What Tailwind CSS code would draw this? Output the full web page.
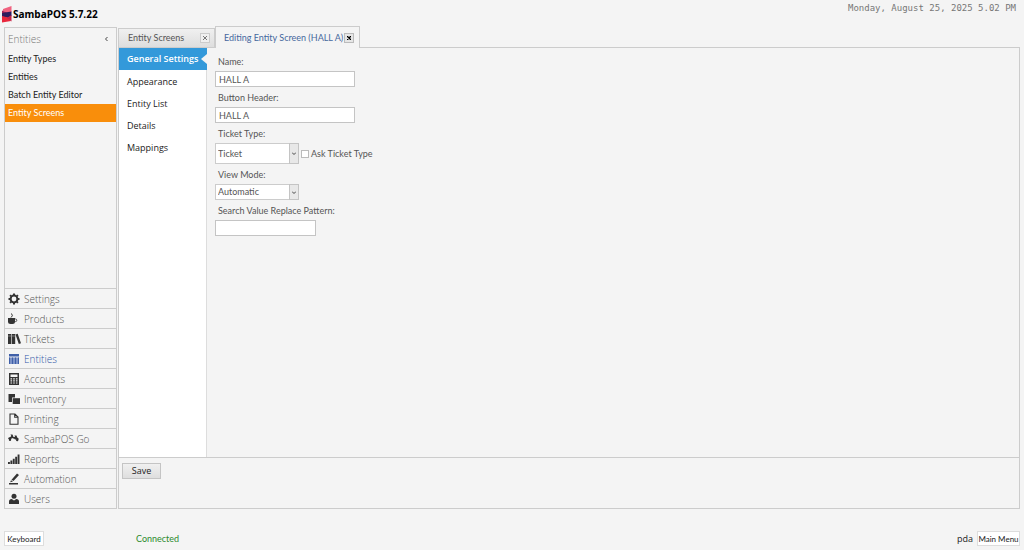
<!DOCTYPE html>
<html lang="en">
<head>
    <meta charset="UTF-8">
    <meta name="viewport" content="width=device-width, initial-scale=1.0">
    <title>SambaPOS 5.7.22</title>
    <script src="https://cdn.jsdelivr.net/npm/@tailwindcss/browser@4"></script>
</head>
<body class="bg-[#f4f4f4] font-['Lato','Noto_Sans',sans-serif] text-[9px] leading-3 text-[#555]">
    <div class="min-h-screen flex flex-col">
        <!-- Header -->
        <header class="h-[27px] flex items-start justify-between pl-[2px] pr-2">
            <div class="flex items-center gap-px pt-1">
                <svg class="w-[10px] h-[18px]" viewBox="0 0 10 18">
                    <path d="M1 4 9.500 1v6L5 8 1 6z" fill="#f0627f"/>
                    <path d="M0 5.500 6 8 0 12z" fill="#a81f52"/>
                    <path d="M0 11.500V8L9.500 6.500V11l-4 2z" fill="#2c1d5e"/>
                    <path d="M0 11 6 12.500 9 16 0 17.500z" fill="#e8273c"/>
                    <path d="M9.500 10v6.500L5 13z" fill="#c32448"/>
                </svg>
                <h1 class="text-[10px] leading-5 font-bold text-black font-['Open_Sans',sans-serif]">SambaPOS 5.7.22</h1>
            </div>
            <time class="pt-[2px] text-[9px] text-[#777] font-['DejaVu_Sans_Mono',monospace]">Monday, August 25, 2025 5.02 PM</time>
        </header>

        <div class="flex-1 flex gap-px pl-1 pr-1">
            <!-- Sidebar -->
            <aside class="w-[113px] shrink-0 flex flex-col border border-[#ccc]">
                <div class="h-[22px] flex items-center justify-between pl-[3px] pr-2 text-[10px] font-['Open_Sans',sans-serif] font-light text-[#777]">
                    <h2>Entities</h2>
                    <button type="button" aria-label="Collapse" class="text-[#444]">
                        <svg class="w-1 h-[6px]" viewBox="0 0 4 6" fill="none" stroke="currentColor"><path d="M3.500 1 1.500 3l2 2"/></svg>
                    </button>
                </div>
                <nav class="flex flex-col text-[#222]">
                    <a href="#" class="h-[18px] px-[3px] flex items-center">Entity Types</a>
                    <a href="#" class="h-[18px] px-[3px] flex items-center">Entities</a>
                    <a href="#" class="h-[18px] px-[3px] flex items-center">Batch Entity Editor</a>
                    <a href="#" class="h-[18px] px-[3px] flex items-center bg-[#f98e0b] text-white">Entity Screens</a>
                </nav>
                <nav class="mt-auto flex flex-col text-[10px] font-['Open_Sans',sans-serif] font-light text-[#555] [&>a]:h-5 [&>a]:flex [&>a]:items-center [&>a]:gap-1 [&>a]:pl-[3px] [&>a]:border-t [&>a]:border-[#ccc] [&_svg]:size-3 [&_svg]:text-[#333]">
                    <a href="#">
                        <svg viewBox="0 0 12 12" fill="none" stroke="currentColor"><circle cx="6" cy="6" r="3.400" stroke-width="2"/><path d="M6 .5V2M6 10v1.500M.5 6H2M10 6h1.500M2.100 2.100l1.100 1.100M8.800 8.800l1.100 1.100M2.100 9.900l1.100-1.100M8.800 3.200l1.100-1.100" stroke-width="2"/></svg>
                        Settings
                    </a>
                    <a href="#">
                        <svg viewBox="0 0 12 12" fill="currentColor"><path d="M0 5h7v3.500Q7 11 4.500 11h-2Q0 11 0 8.500z"/><path d="M7 6h.5q1.300 0 1.300 1.300T7.500 8.600H7" fill="none" stroke="currentColor" stroke-width=".8"/><path d="M3 4.500Q5.500 3 3.500.5" fill="none" stroke="currentColor"/></svg>
                        Products
                    </a>
                    <a href="#">
                        <svg viewBox="0 0 12 12" fill="currentColor" overflow="visible"><path d="M0 1h3.300v10H0zM3.900 1h3.300v10H3.900zM7.500 1.500l2.200-.7L13 10.300l-2.200.7z"/><path d="M0 3h3.300M3.900 3h3.300" stroke="#999" stroke-width=".7"/></svg>
                        Tickets
                    </a>
                    <a href="#" class="text-[#3458a8]">
                        <svg viewBox="0 0 12 12" fill="#3f5fa8"><path d="M1 1h10v2.500H1z"/><path d="M1 4.500h10V11H1z" fill="#7c93c8"/><path d="M1.500 4.500V11M4.500 4.500V11M7.500 4.500V11M10.500 4.500V11" stroke="#3f5fa8"/></svg>
                        Entities
                    </a>
                    <a href="#">
                        <svg viewBox="0 0 12 12" fill="currentColor"><path d="M1 0h10v12H1z"/><path d="M2.500 1.500h7V4h-7zM2.500 5.200h1.600v1.200H2.500zM5.200 5.200h1.600v1.200H5.200zM7.900 5.200h1.600v1.200H7.900zM2.500 7.300h1.600v1.200H2.500zM5.200 7.300h1.600v1.200H5.200zM7.900 7.300h1.600v1.200H7.900zM2.500 9.400h1.600v1.200H2.500zM5.200 9.400h1.600v1.200H5.200zM7.900 9.400h1.600v1.200H7.900z" fill="#f4f4f4"/></svg>
                        Accounts
                    </a>
                    <a href="#">
                        <svg viewBox="0 0 12 12" fill="currentColor"><path d="M.5 1H7v3.500H4V9H.5z"/><path d="M4.700 5.200H12V11H4.700z"/></svg>
                        Inventory
                    </a>
                    <a href="#">
                        <svg viewBox="0 0 12 12" fill="none" stroke="currentColor"><path d="M2 1h5l3 3v7.300H2zM6.700 1v3.300H10" stroke-width="1.100"/></svg>
                        Printing
                    </a>
                    <a href="#">
                        <svg viewBox="0 0 12 12" fill="currentColor"><path d="M2.500 1.500h2L5.500 4H7L6.500 2.500h2L9.200 4.500q1.600.5 1.600 2H7q-.4-1-1.700-1L4 5 3.300 6H0Q.3 4.200 2.300 4L3.300 3z"/><circle cx="2" cy="6.700" r="1.200"/><circle cx="9.200" cy="7" r="1.200"/></svg>
                        SambaPOS Go
                    </a>
                    <a href="#">
                        <svg viewBox="0 0 12 12" fill="currentColor"><path d="M0 9h1.900v2H0zM2.400 7.500h1.900V11H2.400zM4.800 5.800h1.900V11H4.800zM7.200 3.800h1.900V11H7.200zM9.600 1.500h1.900V11H9.600z"/></svg>
                        Reports
                    </a>
                    <a href="#">
                        <svg viewBox="0 0 12 12" fill="currentColor"><path d="M9 .5 11 2 5.500 8 3.500 6.700zM3 7.200 5 8.600 2.200 9.300zM1 10h9v1.500H1z"/></svg>
                        Automation
                    </a>
                    <a href="#">
                        <svg viewBox="0 0 12 12" fill="currentColor"><circle cx="6" cy="3.200" r="2.500"/><path d="M1 11V8.500Q1 6.200 3.700 6L6 7.500 8.300 6Q11 6.200 11 8.500V11z"/></svg>
                        Users
                    </a>
                </nav>
            </aside>

            <!-- Workspace -->
            <main class="flex-1 min-w-0 flex flex-col">
                <div class="flex items-end h-5">
                    <div class="w-[97px] h-[19px] flex items-center justify-between pl-[9px] pr-1 border border-b-0 border-[#ccc] bg-linear-to-b from-[#f0f0f0] to-[#dedede] text-[#555]">
                        <span>Entity Screens</span>
                        <button type="button" aria-label="Close Entity Screens" class="size-[10px] flex items-center justify-center border border-[#ccc] bg-[#f0f0f0]">
                            <svg class="size-1" viewBox="0 0 4 4" stroke="#777"><path d="M0 0l4 4M4 0 0 4"/></svg>
                        </button>
                    </div>
                    <div class="relative z-10 w-[145px] h-[22px] -mb-px flex items-center justify-between pl-2 pr-[5px] border border-b-0 border-[#ccc] bg-[#f4f4f4] text-[#46689e]">
                        <span class="whitespace-nowrap">Editing Entity Screen (HALL A)</span>
                        <button type="button" aria-label="Close Editing Entity Screen" class="size-[10px] shrink-0 flex items-center justify-center border border-[#bbb] bg-[#e6e6e6]">
                            <svg class="size-1" viewBox="0 0 4 4" stroke="#000" stroke-width="1.300"><path d="M0 0l4 4M4 0 0 4"/></svg>
                        </button>
                    </div>
                </div>

                <div class="flex-1 flex flex-col border border-[#ccc]">
                    <div class="flex-1 flex">
                        <nav class="w-[88px] shrink-0 flex flex-col bg-white border-r border-[#ddd] font-['Open_Sans',sans-serif] text-[#222] [&>a]:h-[22px] [&>a]:flex [&>a]:items-center [&>a]:pl-2">
                            <a href="#" class="relative mb-px bg-[#3399da] text-white font-semibold -mr-px">
                                General Settings
                                <svg class="absolute right-0 w-[6px] h-[10px]" viewBox="0 0 6 10"><path d="M6 0v10L0 5z" fill="#f4f4f4"/></svg>
                            </a>
                            <a href="#">Appearance</a>
                            <a href="#">Entity List</a>
                            <a href="#">Details</a>
                            <a href="#">Mappings</a>
                        </nav>

                        <form class="flex-1 flex flex-col items-start pl-2 pt-[3px] [&>label]:h-5 [&>label]:flex [&>label]:items-end [&>label]:pb-[3px] [&>label]:pl-[3px]">
                            <label for="name">Name:</label>
                            <input id="name" type="text" value="HALL A" class="w-[140px] h-4 px-[3px] border border-[#c4c4c4] bg-white">
                            <label for="header">Button Header:</label>
                            <input id="header" type="text" value="HALL A" class="w-[140px] h-4 px-[3px] border border-[#c4c4c4] bg-white">
                            <label for="ticketType">Ticket Type:</label>
                            <div class="flex items-center gap-[2px]">
                                <div class="relative">
                                    <select id="ticketType" class="block appearance-none w-[84px] h-[21px] px-[2px] border border-[#ccc] bg-white"><option>Ticket</option></select>
                                    <span class="absolute inset-y-0 right-0 w-[10px] flex items-center justify-center border border-[#c4c4c4] bg-[#e8e8e8] pointer-events-none">
                                        <svg class="w-1 h-[3px]" viewBox="0 0 4 3" fill="none" stroke="#444"><path d="M0 .5l2 2 2-2"/></svg>
                                    </span>
                                </div>
                                <label class="flex items-center gap-[2px]">
                                    <input type="checkbox" class="appearance-none size-2 border border-[#bbb] bg-white checked:bg-[#3399da]">
                                    Ask Ticket Type
                                </label>
                            </div>
                            <label for="viewMode">View Mode:</label>
                            <div class="relative">
                                <select id="viewMode" class="block appearance-none w-[84px] h-4 px-[2px] border border-[#ccc] bg-white"><option>Automatic</option></select>
                                <span class="absolute inset-y-0 right-0 w-[10px] flex items-center justify-center border border-[#c4c4c4] bg-[#e8e8e8] pointer-events-none">
                                    <svg class="w-1 h-[3px]" viewBox="0 0 4 3" fill="none" stroke="#444"><path d="M0 .5l2 2 2-2"/></svg>
                                </span>
                            </div>
                            <label for="pattern">Search Value Replace Pattern:</label>
                            <input id="pattern" type="text" class="w-[101px] h-4 px-[3px] border border-[#c4c4c4] bg-white">
                        </form>
                    </div>

                    <div class="h-[51px] pl-[3px] pt-[5px] border-t border-[#ccc]">
                        <button type="button" class="w-[39px] h-4 flex items-center justify-center border border-[#c4c4c4] bg-linear-to-b from-[#f0f0f0] to-[#dedede] font-['Open_Sans',sans-serif] text-[#222]">Save</button>
                    </div>
                </div>
            </main>
        </div>

        <!-- Status bar -->
        <footer class="h-[41px] flex items-end pb-1 pl-1 pr-1">
            <button type="button" class="w-10 h-[15px] flex items-center justify-center border border-[#ddd] bg-white text-[8px] text-[#222]">Keyboard</button>
            <span class="ml-[92px] text-[#2c8a2c] leading-[15px]">Connected</span>
            <span class="ml-auto mr-1 font-['Open_Sans',sans-serif] text-[#222] leading-[15px]">pda</span>
            <button type="button" class="w-[43px] h-[15px] flex items-center justify-center border border-[#ddd] bg-white text-[8px] text-[#222] whitespace-nowrap">Main Menu</button>
        </footer>
    </div>
</body>
</html>
